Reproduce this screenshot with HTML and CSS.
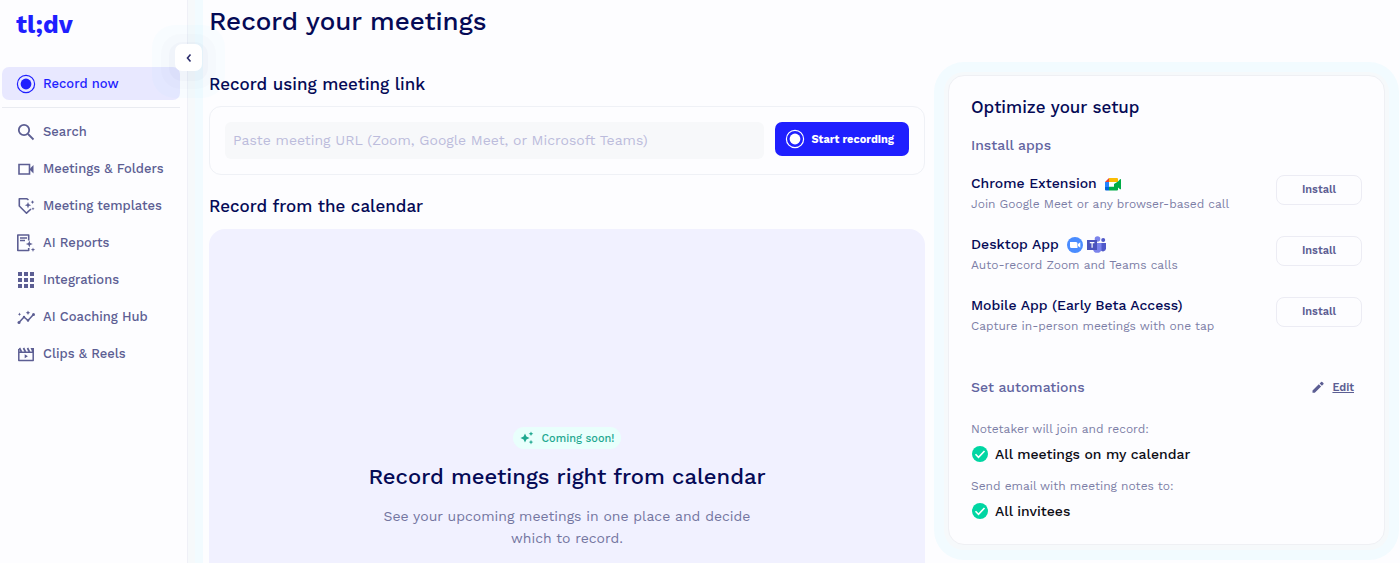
FILE: index.html
```html
<!DOCTYPE html>
<html lang="en">
<head>
    <meta charset="UTF-8">
    <meta name="viewport" content="width=device-width, initial-scale=1.0">
    <title>tl;dv - Record your meetings</title>
    <link rel="stylesheet" href="styles.css">
</head>
<body>
    <div class="app">
        <aside class="sidebar">
            <a class="logo" href="#">tl;dv</a>
            <button class="collapse" type="button" aria-label="Collapse menu">
                <svg width="8" height="10" viewBox="0 0 8 10" fill="none" stroke="currentColor" stroke-width="1.6"><path d="M5.500 1.500L2.500 5L5.500 8.500"/></svg>
            </button>

            <nav class="nav">
                <a class="nav-item active" href="#">
                    <svg class="icon" viewBox="0 0 20 20"><circle cx="10" cy="10" r="8.6" fill="none" stroke="currentColor" stroke-width="1.2"/><circle cx="10" cy="10" r="5.400" fill="currentColor"/></svg>
                    Record now
                </a>
                <hr class="divider">
                <a class="nav-item" href="#">
                    <svg class="icon" viewBox="0 0 20 20" fill="none" stroke="currentColor" stroke-width="1.800"><circle cx="8" cy="8" r="5.2"/><path d="M12 12l5.5 5.5"/></svg>
                    Search
                </a>
                <a class="nav-item" href="#">
                    <svg class="icon" viewBox="0 0 20 20"><path d="M3 5.5h10.500v9.500H3z" fill="none" stroke="currentColor" stroke-width="1.600"/><path d="M14 9.500L17.500 6v8.500L14 11z" fill="currentColor"/></svg>
                    Meetings &amp; Folders
                </a>
                <a class="nav-item" href="#">
                    <svg class="icon" viewBox="0 0 20 20"><path d="M12.500 4L11 2.800H3.300v7.200l7.200 7.200 4.500-4.200" fill="none" stroke="currentColor" stroke-width="1.600" stroke-linejoin="round"/><path d="M12 6l.900 2.300 2.300.900-2.300.900-.900 2.300-.900-2.300-2.300-.900 2.300-.900z" fill="currentColor"/><path d="M16.500 4.300l.600 1.200 1.200.600-1.200.600-.600 1.200-.600-1.200-1.200-.600 1.200-.600zM17 11.300l.500 1 1 .500-1 .500-.500 1-.500-1-1-.500 1-.500z" fill="currentColor"/></svg>
                    Meeting templates
                </a>
                <a class="nav-item" href="#">
                    <svg class="icon" viewBox="0 0 20 20"><path d="M12.700 7.500V2H1.800v15.500h10.900V15" fill="none" stroke="currentColor" stroke-width="1.600" stroke-linejoin="round"/><path d="M4 5h7M4 7.500h5" stroke="currentColor" stroke-width="1.300"/><path d="M13.300 7.500l.900 2.600 2.600.900-2.600.900-.900 2.600-.900-2.600-2.600-.900 2.600-.900zM17 14.500l.600 1.600 1.600.600-1.600.600-.600 1.600-.600-1.600-1.600-.600 1.600-.600z" fill="currentColor"/></svg>
                    AI Reports
                </a>
                <a class="nav-item" href="#">
                    <svg class="icon" viewBox="0 0 20 20" fill="currentColor"><path d="M2 2h4v4H2zM8 2h4v4H8zM14 2h4v4h-4zM2 8h4v4H2zM8 8h4v4H8zM14 8h4v4h-4zM2 14h4v4H2zM8 14h4v4H8zM14 14h4v4h-4z"/></svg>
                    Integrations
                </a>
                <a class="nav-item" href="#">
                    <svg class="icon" viewBox="0 0 20 20"><path d="M3 15.500l5-5.500 4 3.500 5-5.500" fill="none" stroke="currentColor" stroke-width="1.600"/><g fill="currentColor"><circle cx="3" cy="15.500" r="1.500"/><circle cx="8" cy="10" r="1.200"/><circle cx="12" cy="13.500" r="1.200"/><circle cx="17.500" cy="7.500" r="1.500"/><path d="M12 3.500l.700 1.500 1.500.700-1.500.700-.700 1.500-.700-1.500-1.500-.700 1.500-.700zM3.500 5.500l.500 1.200 1.200.500-1.200.500-.500 1.200-.500-1.200-1.200-.500 1.200-.500z"/></g></svg>
                    AI Coaching Hub
                </a>
                <a class="nav-item" href="#">
                    <svg class="icon" viewBox="0 0 20 20"><path d="M2.800 5v11.500h14.400V5M2.800 8.300h14.400" fill="none" stroke="currentColor" stroke-width="1.500" stroke-linejoin="round"/><path d="M3.500 4l2 4M7.500 4l2 4M11.500 4l2 4" stroke="currentColor" stroke-width="1.700"/><path d="M14.500 4H18v4.500h-1.500zM8.700 10.300v4l3.200-2z" fill="currentColor"/></svg>
                    Clips &amp; Reels
                </a>
            </nav>
        </aside>

        <main class="content">
            <section class="record">
                <h1>Record your meetings</h1>

                <h2><label for="meeting-url">Record using meeting link</label></h2>
                <form class="link-box">
                    <input class="url" id="meeting-url" type="text" placeholder="Paste meeting URL (Zoom, Google Meet, or Microsoft Teams)">
                    <button class="start" type="button">
                        <svg class="icon" viewBox="0 0 20 20"><circle cx="10" cy="10" r="8.600" fill="none" stroke="currentColor" stroke-width="1.200"/><circle cx="10" cy="10" r="5.400" fill="currentColor"/></svg>
                        Start recording
                    </button>
                </form>

                <h2>Record from the calendar</h2>
                <div class="calendar">
                    <span class="badge">
                        <svg width="14" height="14" viewBox="0 0 14 14" fill="currentColor"><path d="M5 2.500l1.400 3.100L9.500 7 6.400 8.400 5 11.500 3.600 8.400.500 7l3.100-1.400zM11 .500l.700 1.600 1.600.700-1.600.700-.700 1.600-.700-1.600-1.600-.700 1.600-.700zM11 8.800l.700 1.600 1.600.700-1.600.700-.700 1.600-.700-1.600-1.600-.700 1.600-.700z"/></svg>
                        Coming soon!
                    </span>
                    <h3>Record meetings right from calendar</h3>
                    <p>See your upcoming meetings in one place and decide which to record.</p>
                </div>
            </section>

            <section class="setup">
                <h2>Optimize your setup</h2>
                <h4>Install apps</h4>

                <div class="app-row">
                    <div class="app-info">
                        <strong>Chrome Extension
                            <svg class="brand" width="16" height="16" viewBox="0 0 16 16"><path d="M4 2h8a1 1 0 0 1 1 1v3H4z" fill="#fbbc04"/><path d="M4 2v4H0z" fill="#ea4335"/><path d="M0 6h4v5H0z" fill="#2684fc"/><path d="M0 11h4v3.500H1a1 1 0 0 1-1-1z" fill="#0066da"/><path d="M4 10.500h9v3a1 1 0 0 1-1 1H4z" fill="#00ac47"/><path d="M9 8l4-2.500L15 3.200q1-.500 1 .500v9q0 1-1 .500L13 11.500V14H9z" fill="#00ac47"/><path d="M4 6h5v4.500H4z" fill="#fff"/></svg>
                        </strong>
                        <span>Join Google Meet or any browser-based call</span>
                    </div>
                    <button class="install" type="button">Install</button>
                </div>
                <div class="app-row">
                    <div class="app-info">
                        <strong>Desktop App
                            <svg class="brand" width="16" height="16" viewBox="0 0 16 16"><circle cx="8" cy="8" r="8" fill="#4a8cff"/><path d="M3 5h6a1.500 1.500 0 0 1 1.500 1.500V11h-6A1.500 1.500 0 0 1 3 9.500zM11 7l2.300-1.700v5.400L11 9z" fill="#fff"/></svg>
                            <svg class="brand teams" width="19" height="18" viewBox="0 0 19 18"><circle cx="16.200" cy="4" r="2" fill="#5059c9"/><circle cx="10.500" cy="3" r="2.800" fill="#7b83eb"/><path d="M13.500 7H19v5.500a3 3 0 0 1-5.500 1.500z" fill="#5059c9"/><path d="M6 7h8.500v6.200a4.300 4.300 0 0 1-8.500 0z" fill="#7b83eb"/><path d="M0 4h10v10H0z" fill="#4b53bc"/><path d="M2.800 6.700h4.600M5.100 6.700v5" stroke="#fff" stroke-width="1.200"/></svg>
                        </strong>
                        <span>Auto-record Zoom and Teams calls</span>
                    </div>
                    <button class="install" type="button">Install</button>
                </div>
                <div class="app-row">
                    <div class="app-info">
                        <strong>Mobile App (Early Beta Access)</strong>
                        <span>Capture in-person meetings with one tap</span>
                    </div>
                    <button class="install" type="button">Install</button>
                </div>

                <div class="auto-head">
                    <h4>Set automations</h4>
                    <a class="edit" href="#">
                        <svg width="14" height="14" viewBox="0 0 14 14" fill="currentColor"><path d="M1.500 10.500v2.300h2.300l6.300-6.300-2.300-2.300zM8.600 3.400l1.500-1.500a.8.8 0 0 1 1.100 0l1.200 1.200a.8.8 0 0 1 0 1.100l-1.500 1.500z"/></svg>
                        <span>Edit</span>
                    </a>
                </div>

                <dl class="automations">
                    <dt>Notetaker will join and record:</dt>
                    <dd>
                        <svg width="16" height="16" viewBox="0 0 16 16"><circle cx="8" cy="8" r="8" fill="#00d6a3"/><path d="M3.500 8.300l3 3 6-6.300" fill="none" stroke="#fff" stroke-width="1.600"/></svg>
                        All meetings on my calendar
                    </dd>
                    <dt>Send email with meeting notes to:</dt>
                    <dd>
                        <svg width="16" height="16" viewBox="0 0 16 16"><circle cx="8" cy="8" r="8" fill="#00d6a3"/><path d="M3.500 8.300l3 3 6-6.300" fill="none" stroke="#fff" stroke-width="1.600"/></svg>
                        All invitees
                    </dd>
                </dl>
            </section>
        </main>
    </div>
</body>
</html>
```
FILE: styles.css
```css
* {
    box-sizing: border-box;
}

body {
    margin: 0;
    background: #fdfdff;
    color: #050a56;
    font-family: "Work Sans", Inter, "Liberation Sans", sans-serif;
    font-weight: 500;
}

h1, h2, h3, h4, p, dl, dd {
    margin: 0;
    font-weight: 500;
}

a {
    color: inherit;
    text-decoration: none;
}

button, input {
    font-family: inherit;
}

button {
    cursor: pointer;
}

svg {
    flex: none;
}

.app {
    display: flex;
    height: 100vh;
    overflow: hidden;
}

/* Sidebar */
.sidebar {
    position: relative;
    flex: none;
    width: 188px;
    border-right: 1px solid #eff0f7;
    box-shadow: 7px 0 0 #f6f9fb, 15px 0 0 #f2fbff;
}

.logo {
    display: block;
    padding: 9px 16px 0;
    color: #1f1fff;
    font-size: 25px;
    font-weight: 700;
    line-height: 32px;
}

.collapse {
    position: absolute;
    top: 44px;
    right: -15px;
    display: flex;
    align-items: center;
    justify-content: center;
    width: 27px;
    height: 27px;
    padding: 0;
    border: none;
    border-radius: 7px;
    background: #fff;
    color: #2a2c6c;
    box-shadow: 0 4px 0 6px #0a0f5c05, 0 4px 0 14px #0a0f5c03, 0 4px 0 23px #00c8ff05;
}

.nav {
    display: flex;
    flex-direction: column;
    gap: 4px;
    padding: 26px 7px 0 2px;
}

.nav-item {
    display: flex;
    align-items: center;
    gap: 7px;
    height: 33px;
    padding: 0 14px;
    border-radius: 7px;
    color: #5c5e93;
    font-size: 13px;
    white-space: nowrap;
}

.nav-item.active {
    background: #e8e8ff;
    color: #1f1fff;
}

.icon {
    width: 20px;
    height: 20px;
}

.divider {
    width: 100%;
    margin: 3px 0;
    border: none;
    border-top: 1px solid #e9ebf1;
}

/* Main area */
.content {
    display: flex;
    flex: 1;
    align-items: flex-start;
    gap: 23px;
    padding: 0 15px 0 21px;
}

.record {
    display: flex;
    flex: 1;
    flex-direction: column;
    height: 100vh;
    padding-top: 5px;
}

h1 {
    margin-bottom: 35px;
    font-size: 26px;
    line-height: 32px;
}

h2 {
    font-size: 17px;
    line-height: 24px;
}

.link-box {
    display: flex;
    align-items: flex-start;
    gap: 11px;
    margin: 10px 0 19px;
    padding: 15px;
    border: 1px solid #eff1f6;
    border-radius: 12px;
}

.url {
    flex: 1;
    min-width: 0;
    height: 37px;
    padding: 0 8px 2px;
    border: none;
    border-radius: 6px;
    background: #f7f8fa;
    font-size: 14px;
}

.url::placeholder {
    color: #bcbcdc;
}

.start {
    display: flex;
    align-items: center;
    gap: 6px;
    height: 34px;
    padding: 0 15px 0 10px;
    border: none;
    border-radius: 7px;
    background: #1f1fff;
    color: #fff;
    font-size: 11px;
    font-weight: 700;
}

.calendar {
    display: flex;
    flex: 1;
    flex-direction: column;
    align-items: center;
    margin-top: 11px;
    padding-top: 198px;
    border-radius: 16px 16px 0 0;
    background: #f1f1ff;
    text-align: center;
}

.badge {
    display: flex;
    align-items: center;
    gap: 8px;
    height: 22px;
    padding: 0 7px;
    border-radius: 11px;
    background: #e9fffc;
    color: #1fa890;
    font-size: 11px;
}

h3 {
    margin: 12px 0;
    font-size: 22px;
    line-height: 32px;
}

.calendar p {
    max-width: 400px;
    color: #74769f;
    font-size: 14px;
    font-weight: 400;
    line-height: 22px;
}

/* Setup card */
.setup {
    flex: none;
    width: 38%;
    max-width: 437px;
    margin-top: 75px;
    padding: 19px 22px 11px;
    border: 1px solid #eff0f4;
    border-radius: 16px;
    background: #fdfdff;
    box-shadow: 0 1px 0 4px #f6f9fb, 0 1px 0 14px #f2fbff;
}

h4 {
    color: #6264a0;
    font-size: 14px;
    line-height: 20px;
}

.setup > h4 {
    margin: 16px 0 17px;
}

.app-row {
    display: flex;
    align-items: flex-start;
    justify-content: space-between;
    margin-bottom: 19px;
}

.app-info strong {
    display: flex;
    align-items: center;
    gap: 4px;
    font-size: 14px;
    font-weight: 500;
    line-height: 22px;
}

.brand {
    margin: 2px 0 0 4px;
}

.teams {
    margin-left: 0;
}

.app-info span {
    display: block;
    color: #7c7ea6;
    font-size: 12px;
    font-weight: 400;
    line-height: 20px;
}

.install {
    width: 86px;
    height: 30px;
    margin-top: 3px;
    padding: 0 0 2px;
    border: 1px solid #ececf4;
    border-radius: 8px;
    background: transparent;
    color: #5c5e93;
    font-size: 11px;
    font-weight: 600;
}

.auto-head {
    display: flex;
    align-items: center;
    justify-content: space-between;
    margin: 41px 8px 22px 0;
}

.edit {
    display: flex;
    align-items: center;
    gap: 7px;
    color: #5c5e93;
    font-size: 11px;
    font-weight: 600;
}

.edit span {
    text-decoration: underline;
}

.automations dt {
    color: #7c7ea6;
    font-size: 12px;
    font-weight: 400;
    line-height: 20px;
}

.automations dd {
    display: flex;
    align-items: center;
    gap: 7px;
    margin: 4px 0 11px 1px;
    color: #0b0b14;
    font-size: 14px;
    line-height: 22px;
}
```
